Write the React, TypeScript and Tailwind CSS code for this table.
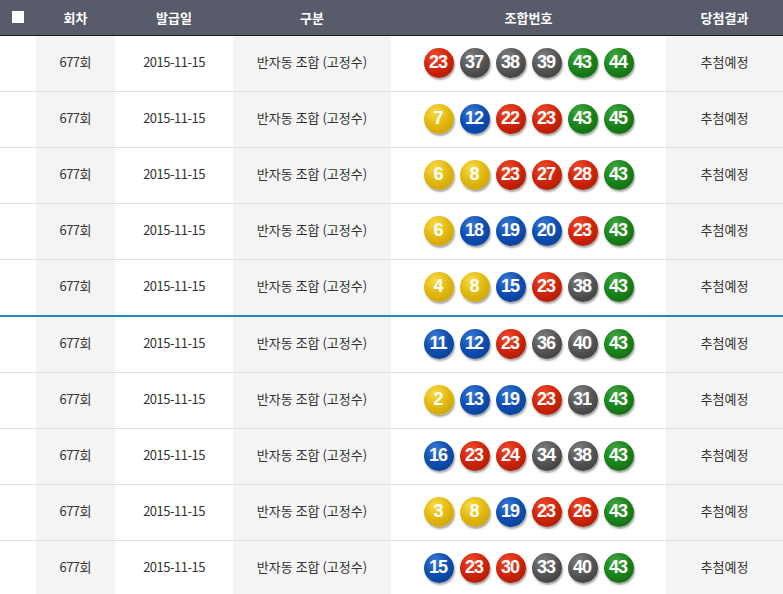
const rows: number[][] = [
  [23, 37, 38, 39, 43, 44],
  [7, 12, 22, 23, 43, 45],
  [6, 8, 23, 27, 28, 43],
  [6, 18, 19, 20, 23, 43],
  [4, 8, 15, 23, 38, 43],
  [11, 12, 23, 36, 40, 43],
  [2, 13, 19, 23, 31, 43],
  [16, 23, 24, 34, 38, 43],
  [3, 8, 19, 23, 26, 43],
  [15, 23, 30, 33, 40, 43],
];

const ballClass = (n: number) => {
  if (n <= 10) return 'bg-[radial-gradient(circle_at_38%_28%,#f7dc4a_0%,#e3b90f_45%,#c39a00_100%)]';
  if (n <= 20) return 'bg-[radial-gradient(circle_at_38%_28%,#3d7ad6_0%,#0f4fb3_45%,#073b8c_100%)]';
  if (n <= 30) return 'bg-[radial-gradient(circle_at_38%_28%,#f04c2c_0%,#d2260b_45%,#9c1600_100%)]';
  if (n <= 40) return 'bg-[radial-gradient(circle_at_38%_28%,#808080_0%,#585858_45%,#333333_100%)]';
  return 'bg-[radial-gradient(circle_at_38%_28%,#40a840_0%,#1c851c_45%,#0a620a_100%)]';
};

const Ball = ({ n }: { n: number }) => (
  <div
    className={`w-[30px] h-[30px] rounded-full flex items-center justify-center text-white text-[18px] font-bold tracking-[-1px] shadow-[1px_2px_2px_rgba(0,0,0,0.35)] ${ballClass(n)}`}
    style={{ fontFamily: '"Liberation Sans", Arial, sans-serif' }}
  >
    <span className="-ml-[1px]">{n}</span>
  </div>
);

const App = () => {
  return (
    <div
      className="w-[783px] bg-white text-[13px] text-[#333]"
      style={{ fontFamily: '"Noto Sans CJK KR", "Noto Sans", sans-serif' }}
    >
      <div className="flex h-[36px] bg-[#585c6a] border-b border-[#1a1a1a] text-white font-bold">
        <div className="w-[36px] flex items-center justify-center pb-[1px]">
          <div className="w-[12px] h-[12px] bg-white" />
        </div>
        <div className="w-[79px] flex items-center justify-center">회차</div>
        <div className="w-[118px] flex items-center justify-center">발급일</div>
        <div className="w-[158px] flex items-center justify-center">구분</div>
        <div className="w-[275px] flex items-center justify-center">조합번호</div>
        <div className="w-[117px] flex items-center justify-center">당첨결과</div>
      </div>
      {rows.map((nums, i) => (
        <div
          key={i}
          className={`flex h-[56px] ${i === 4 ? 'h-[57px] border-b-2 border-[#1f8ab3]' : 'border-b border-[#e6ded4]'}`}
        >
          <div className="w-[36px]" />
          <div className="w-[79px] bg-[#f4f4f4] flex items-center justify-center pb-[4px]">
            <span className="tracking-[-0.6px]">677</span>회
          </div>
          <div className="w-[118px] flex items-center justify-center pb-[4px] tracking-[-0.5px]">2015-11-15</div>
          <div className="w-[158px] bg-[#f4f4f4] flex items-center justify-center pb-[4px]">반자동 조합 (고정수)</div>
          <div className="w-[275px] flex items-center justify-center gap-[6px] pb-[2px]">
            {nums.map((n, j) => (
              <Ball key={j} n={n} />
            ))}
          </div>
          <div className="w-[117px] bg-[#f4f4f4] flex items-center justify-center pb-[4px]">추첨예정</div>
        </div>
      ))}
    </div>
  );
};

export default App;
